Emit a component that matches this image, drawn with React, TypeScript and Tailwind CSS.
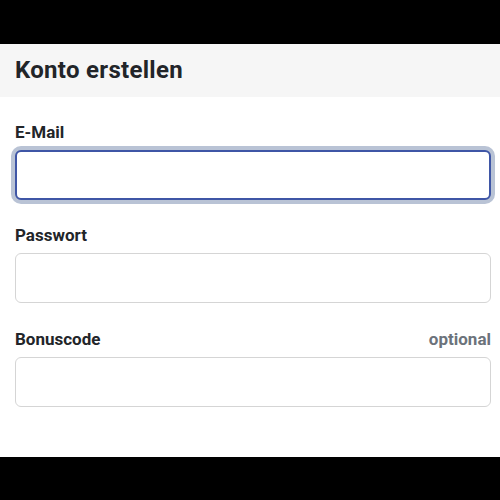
import React from "react";

export default function App() {
  const font = { fontFamily: "Roboto, 'Liberation Sans', sans-serif" };
  return (
    <div className="w-[500px] h-[500px] flex flex-col bg-white" style={font}>
      <div className="h-[44px] bg-black" />
      <div className="h-[53px] bg-[#f6f6f6] px-[15px] flex items-center">
        <h1 className="text-[24px] leading-[53px] font-bold tracking-[0.3px] text-[#222529]">Konto erstellen</h1>
      </div>
      <div className="flex-1 pl-[15px] pr-[9px] pt-[23px] flex flex-col">
        <label className="text-[17px] leading-[24px] font-bold text-[#222529]">E-Mail</label>
        <input
          type="email"
          className="mt-[6px] h-[50px] w-full rounded-[6px] border-2 border-[#3f56a6] bg-white outline-none shadow-[0_0_0_4px_#b9c3d5]"
        />
        <label className="mt-[23px] text-[17px] leading-[24px] font-bold text-[#222529]">Passwort</label>
        <input
          type="password"
          className="mt-[6px] h-[50px] w-full rounded-[6px] border border-[#d5d5d5] bg-white outline-none"
        />
        <div className="mt-[24px] flex justify-between text-[17px] leading-[24px] font-bold">
          <span className="text-[#222529]">Bonuscode</span>
          <span className="text-[#6c737b]">optional</span>
        </div>
        <input
          type="text"
          className="mt-[6px] h-[50px] w-full rounded-[6px] border border-[#d5d5d5] bg-white outline-none"
        />
      </div>
      <div className="h-[43px] bg-black" />
    </div>
  );
}
